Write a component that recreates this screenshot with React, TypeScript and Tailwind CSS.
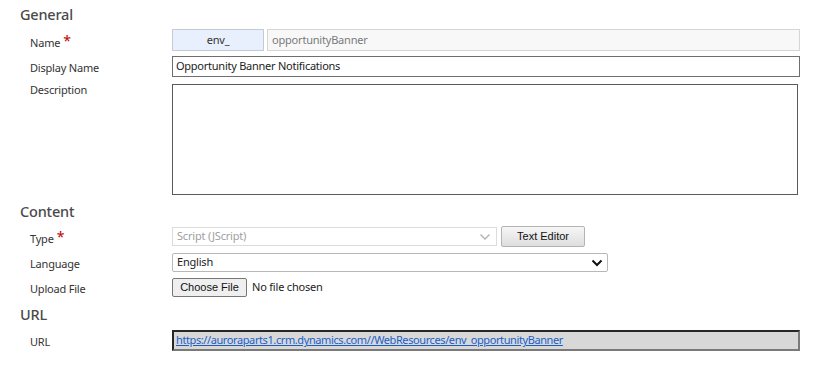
import React from "react";

const font = { fontFamily: '"Segoe UI", "Noto Sans", "Open Sans", sans-serif' };

function Label({ children, req }: { children: React.ReactNode; req?: boolean }) {
  return (
    <div className="w-[142px] shrink-0 text-[11px] tracking-[-0.2px] text-[#333] leading-none flex items-start">
      <span>{children}</span>
      {req && <span className="text-[#c00000] text-[14px] leading-none ml-[3px] -mt-[3px]">*</span>}
    </div>
  );
}

function Chevron({ color, w }: { color: string; w: number }) {
  return (
    <svg width="12" height="8" viewBox="0 0 12 8">
      <path d="M1.5 1.5 L6 6 L10.5 1.5" fill="none" stroke={color} strokeWidth={w} />
    </svg>
  );
}

const heading = "pl-[20px] text-[14.5px] font-medium tracking-[-0.2px] text-[#4a4a4a] leading-[16px]";

export default function App() {
  return (
    <div className="w-[816px] h-[372px] bg-white overflow-hidden" style={font}>
      <div className={heading + " pt-[6px]"}>General</div>

      <div className="pl-[30px] mt-[7px] flex items-center">
        <div className="pt-[5px]"><Label req>Name</Label></div>
        <div className="flex gap-[3px] h-[22px]">
          <div className="w-[92px] h-[22px] bg-[#e8f0fd] border border-[#c4cbd4] flex items-center justify-center text-[11px] tracking-[-0.2px] text-[#333]">env_</div>
          <div className="w-[533px] h-[22px] bg-[#f8f8f8] border border-[#d6d6d6] flex items-center pl-[4px] text-[11px] tracking-[-0.2px] text-[#7a7a7a]">opportunityBanner</div>
        </div>
      </div>

      <div className="pl-[30px] mt-[5px] flex items-center">
        <div className="pt-[2px]"><Label>Display Name</Label></div>
        <div className="w-[628px] h-[21px] border border-[#6e6e6e] flex items-center pl-[3px] text-[11px] tracking-[-0.25px] text-[#222]">Opportunity Banner Notifications</div>
      </div>

      <div className="pl-[30px] mt-[7px] flex items-start">
        <div className="pt-[0px]"><Label>Description</Label></div>
        <div className="w-[626px] h-[111px] border border-[#5a5a5a]" />
      </div>

      <div className={heading + " mt-[8px]"}>Content</div>

      <div className="pl-[30px] mt-[7px] flex items-center">
        <div className="pt-[4px]"><Label req>Type</Label></div>
        <div className="flex items-center gap-[4px]">
          <div className="w-[325px] h-[19px] border border-[#dcdcdc] flex items-center justify-between pl-[4px] pr-[5px] text-[11px] tracking-[-0.2px] text-[#a0a0a0]">
            <span>Script (JScript)</span>
            <Chevron color="#b0b0b0" w={1.3} />
          </div>
          <div
            className="w-[84px] h-[21px] border border-[#b4b4b4] rounded-[2px] flex items-center justify-center text-[11px] text-[#111] bg-gradient-to-b from-[#f6f6f6] to-[#dedede]"
            style={{ fontFamily: '"Liberation Sans", Arial, sans-serif' }}
          >
            Text Editor
          </div>
        </div>
      </div>

      <div className="pl-[30px] mt-[6px] flex items-center">
        <div className="pt-[2px]"><Label>Language</Label></div>
        <div className="w-[436px] h-[19px] border border-[#b8b8b8] rounded-[2px] flex items-center justify-between pl-[4px] pr-[4px] text-[11px] tracking-[-0.2px] text-[#222]">
          <span>English</span>
          <Chevron color="#111" w={2} />
        </div>
      </div>

      <div className="pl-[30px] mt-[6px] flex items-center">
        <div className="pt-[2px]"><Label>Upload File</Label></div>
        <div className="flex items-center">
          <div
            className="w-[75px] h-[19px] border border-[#767676] rounded-[2px] bg-[#efefef] flex items-center justify-center text-[11px] text-[#111]"
            style={{ fontFamily: '"Liberation Sans", Arial, sans-serif' }}
          >
            Choose File
          </div>
          <span className="ml-[5px] text-[11px] tracking-[-0.2px] text-[#222]">No file chosen</span>
        </div>
      </div>

      <div className={heading + " mt-[9px]"}>URL</div>

      <div className="pl-[30px] mt-[8px] flex items-center">
        <div className="pt-[2px]"><Label>URL</Label></div>
        <div className="w-[628px] h-[21px] bg-[#d8d8d8] border-2 border-t-[#262626] border-l-[#262626] border-r-[#7a7a7a] border-b-[#7a7a7a] flex items-center pl-[2px]">
          <a className="text-[11px] tracking-[-0.4px] text-[#1a5fc8] underline" href="#">https://auroraparts1.crm.dynamics.com//WebResources/env_opportunityBanner</a>
        </div>
      </div>
    </div>
  );
}
